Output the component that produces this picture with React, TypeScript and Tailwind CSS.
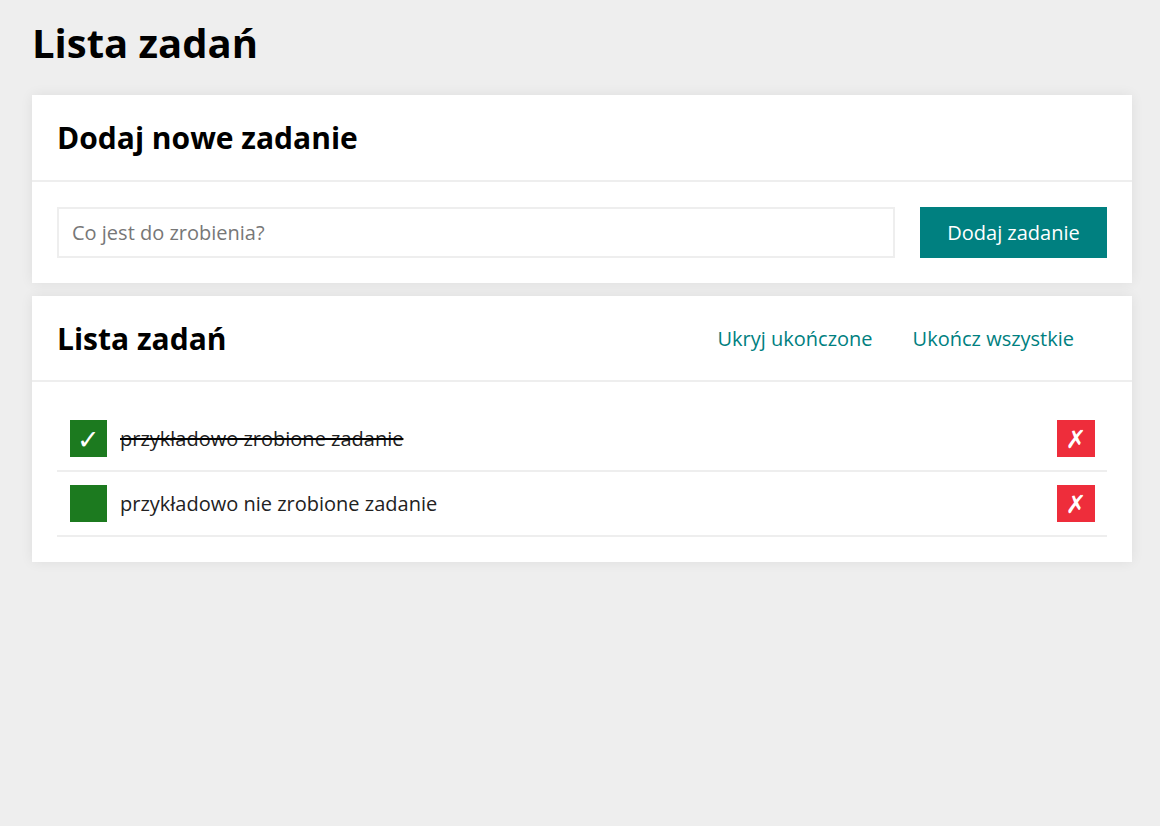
import React, { useState } from 'react';

interface Task {
    id: number;
    text: string;
    done: boolean;
}

const App: React.FC = () => {
    const [tasks, setTasks] = useState<Task[]>([
        { id: 1, text: 'przykładowo zrobione zadanie', done: true },
        { id: 2, text: 'przykładowo nie zrobione zadanie', done: false },
    ]);
    const [value, setValue] = useState('');

    const toggle = (id: number) =>
        setTasks((prev) => prev.map((t) => (t.id === id ? { ...t, done: !t.done } : t)));

    const remove = (id: number) => setTasks((prev) => prev.filter((t) => t.id !== id));

    const add = () => {
        if (!value.trim()) return;
        setTasks((prev) => [...prev, { id: Date.now(), text: value.trim(), done: false }]);
        setValue('');
    };

    return (
        <div className="min-h-screen bg-[#eeeeee] pl-8 pr-7 pt-[23px] pb-10 font-['Open_Sans','DejaVu_Sans',sans-serif] text-[#222]">
            <h1 className="text-[40px] leading-none font-bold text-black mb-8">Lista zadań</h1>

            {/* Dodawanie */}
            <section className="bg-white shadow-[0_0_12px_rgba(0,0,0,0.07)]">
                <div className="px-[25px] pt-[25px] pb-[24px] border-b-2 border-[#eeeeee]">
                    <h2 className="text-[30px] leading-[36px] font-bold text-black">Dodaj nowe zadanie</h2>
                </div>
                <div className="flex gap-[25px] p-[25px]">
                    <input
                        className="flex-1 h-[51px] border-2 border-[#eeeeee] px-[13px] text-xl text-[#222] placeholder:text-[#777] outline-none"
                        placeholder="Co jest do zrobienia?"
                        value={value}
                        onChange={(e) => setValue(e.target.value)}
                    />
                    <button
                        className="w-[187px] h-[51px] bg-[#008080] text-white text-xl"
                        onClick={add}
                    >
                        Dodaj zadanie
                    </button>
                </div>
            </section>

            {/* Lista */}
            <section className="bg-white shadow-[0_0_12px_rgba(0,0,0,0.07)] mt-[13px]">
                <div className="flex items-center px-[25px] pt-[25px] pb-[23px] border-b-2 border-[#eeeeee]">
                    <h2 className="text-[30px] leading-[36px] font-bold text-black">Lista zadań</h2>
                    <div className="ml-auto flex gap-10 pr-[33px] text-xl text-[#008080]">
                        <button>Ukryj ukończone</button>
                        <button>Ukończ wszystkie</button>
                    </div>
                </div>
                <ul className="p-[25px]">
                    {tasks.map((task) => (
                        <li
                            key={task.id}
                            className="flex items-center pl-[13px] pr-3 py-[13px] border-b-2 border-[#eeeeee]"
                        >
                            <button
                                className="w-[37px] h-[37px] bg-[#1c7a1f] text-white text-[27px] font-light leading-none flex items-center justify-center"
                                onClick={() => toggle(task.id)}
                            >
                                {task.done ? '✓' : ''}
                            </button>
                            <span className={`ml-[13px] text-xl ${task.done ? 'line-through decoration-black' : ''}`}>
                                {task.text}
                            </span>
                            <button
                                className="ml-auto w-[38px] h-[37px] bg-[#ee2d3b] text-white text-[25px] leading-none flex items-center justify-center"
                                onClick={() => remove(task.id)}
                            >
                                ✗
                            </button>
                        </li>
                    ))}
                </ul>
            </section>
        </div>
    );
};

export default App;
